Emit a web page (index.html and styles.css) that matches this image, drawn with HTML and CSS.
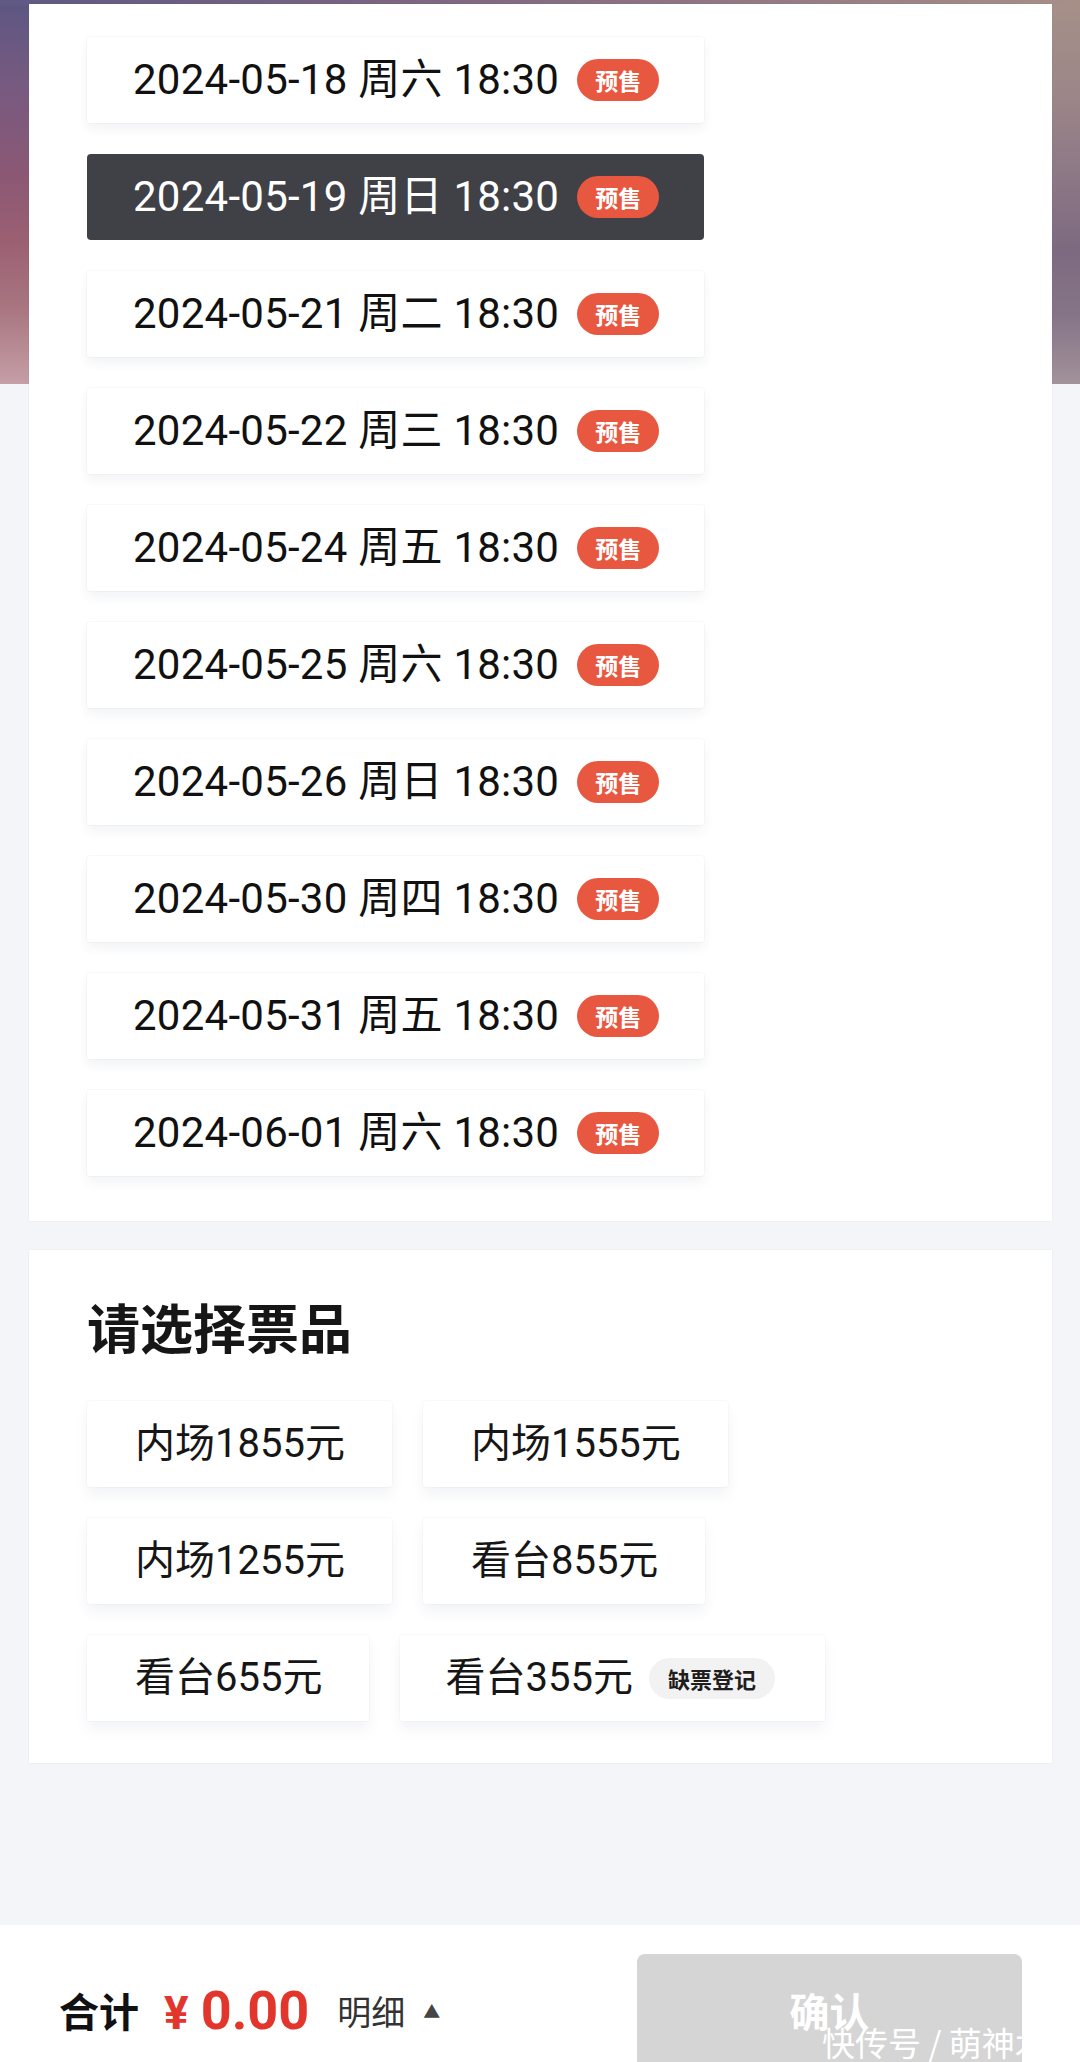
FILE: index.html
```html
<!DOCTYPE html>
<html lang="zh-CN">
<head>
<meta charset="utf-8">
<title>选择场次与票品</title>
<link rel="stylesheet" href="styles.css">
</head>
<body>
<div class="page">
  <section class="card sessions">
    <div class="session"><span class="session-text">2024-05-18 周六 18:30</span><span class="badge">预售</span></div>
    <div class="session active"><span class="session-text">2024-05-19 周日 18:30</span><span class="badge">预售</span></div>
    <div class="session"><span class="session-text">2024-05-21 周二 18:30</span><span class="badge">预售</span></div>
    <div class="session"><span class="session-text">2024-05-22 周三 18:30</span><span class="badge">预售</span></div>
    <div class="session"><span class="session-text">2024-05-24 周五 18:30</span><span class="badge">预售</span></div>
    <div class="session"><span class="session-text">2024-05-25 周六 18:30</span><span class="badge">预售</span></div>
    <div class="session"><span class="session-text">2024-05-26 周日 18:30</span><span class="badge">预售</span></div>
    <div class="session"><span class="session-text">2024-05-30 周四 18:30</span><span class="badge">预售</span></div>
    <div class="session"><span class="session-text">2024-05-31 周五 18:30</span><span class="badge">预售</span></div>
    <div class="session"><span class="session-text">2024-06-01 周六 18:30</span><span class="badge">预售</span></div>
  </section>

  <section class="card tickets">
    <h2 class="title">请选择票品</h2>
    <div class="ticket-rows">
      <div class="ticket-row">
        <div class="ticket">内场1855元</div>
        <div class="ticket">内场1555元</div>
      </div>
      <div class="ticket-row">
        <div class="ticket">内场1255元</div>
        <div class="ticket">看台855元</div>
      </div>
      <div class="ticket-row">
        <div class="ticket">看台655元</div>
        <div class="ticket ticket-short">看台355元<span class="tag">缺票登记</span></div>
      </div>
    </div>
  </section>
</div>

<footer class="bar">
  <div class="total">
    <span class="total-label">合计</span>
    <span class="price"><span class="yen">¥</span>0.00</span>
    <span class="detail">明细</span>
    <span class="arrow">▲</span>
  </div>
  <div class="confirm">
    <span class="confirm-text">确认</span>
  </div>
  <span class="watermark">快传号 / 萌神木</span>
</footer>
</body>
</html>
```

FILE: styles.css
```css
* { box-sizing: border-box; }

html, body {
  margin: 0;
  padding: 0;
}

body {
  width: 1080px;
  height: 2062px;
  overflow: hidden;
  font-family: Roboto, "Noto Sans CJK SC", sans-serif;
  color: #151515;
  background: #f4f5f8;
}

.page {
  padding: 4px 28px 0 29px;
  background:
    linear-gradient(to right, #5f5984 0%, #7a6480 35%, #8f7683 65%, #a69088 100%) left top / 100% 5px no-repeat,
    linear-gradient(to bottom, #5c5783 0%, #775a80 22%, #8a5874 45%, #9a5f72 62%, #a87580 80%, #c59ea6 100%) left top / 540px 384px no-repeat,
    linear-gradient(to bottom, #a69088 0%, #9c8688 25%, #8d7886 45%, #7e6a80 65%, #857488 82%, #a29299 100%) right top / 540px 384px no-repeat,
    #f4f5f8;
}

.card {
  background: #ffffff;
  box-shadow: 0 0 1px rgba(40, 30, 50, 0.12);
}

/* sessions */
.sessions {
  display: flex;
  flex-direction: column;
  align-items: flex-start;
  gap: 31px;
  padding: 33px 58px 45px 58px;
  height: 1217px;
}

.session {
  display: flex;
  align-items: center;
  height: 86px;
  padding: 0 45px 0 46px;
  background: #ffffff;
  border-radius: 3px;
  box-shadow: 0 0 0 1px rgba(0, 0, 0, 0.025), 0 6px 12px rgba(40, 50, 90, 0.06);
}

.session-text {
  font-size: 42px;
  line-height: 1;
  letter-spacing: 0.25px;
  color: #111111;
  white-space: nowrap;
}

.session.active {
  background: #404146;
  border-radius: 4px;
  box-shadow: none;
}

.session.active .session-text {
  color: #ffffff;
}

.badge {
  display: inline-flex;
  align-items: center;
  justify-content: center;
  width: 82px;
  height: 42px;
  margin-left: 18px;
  border-radius: 21px;
  background: #e8573f;
  color: #ffffff;
  font-family: "Noto Sans CJK SC", sans-serif;
  font-size: 23px;
  font-weight: 700;
  line-height: 1;
}

/* tickets */
.tickets {
  margin-top: 29px;
  padding: 50px 58px 42px 58px;
  height: 513px;
}

.title {
  margin: 0;
  font-family: "Noto Sans CJK SC", sans-serif;
  font-size: 53px;
  line-height: 52px;
  font-weight: 700;
  color: #161616;
}

.ticket-rows {
  display: flex;
  flex-direction: column;
  gap: 31px;
  margin-top: 49px;
}

.ticket-row {
  display: flex;
  gap: 31px;
}

.ticket {
  display: flex;
  align-items: center;
  height: 86px;
  padding: 0 47px 0 48px;
  background: #ffffff;
  border-radius: 3px;
  font-size: 40px;
  line-height: 1;
  color: #161616;
  white-space: nowrap;
  box-shadow: 0 0 0 1px rgba(0, 0, 0, 0.02), 0 8px 14px rgba(40, 55, 110, 0.06);
}

.ticket-short {
  padding: 0 50px 0 45px;
}

.tag {
  display: inline-flex;
  align-items: center;
  justify-content: center;
  height: 41px;
  margin-left: 16px;
  padding: 0 19px;
  border-radius: 21px;
  background: #f2f2f3;
  color: #1e1e1e;
  font-family: "Noto Sans CJK SC", sans-serif;
  font-size: 22px;
  font-weight: 700;
}

/* bottom bar */
.bar {
  position: relative;
  display: flex;
  justify-content: space-between;
  align-items: flex-start;
  margin-top: 162px;
  height: 137px;
  padding: 0 58px 0 59px;
  background: #ffffff;
}

.total {
  display: flex;
  align-items: center;
  height: 56px;
  margin-top: 57px;
  white-space: nowrap;
}

.total-label {
  font-family: "Noto Sans CJK SC", sans-serif;
  font-size: 40px;
  font-weight: 700;
  color: #111111;
}

.price {
  margin-left: 25px;
  font-family: Roboto, sans-serif;
  font-size: 54px;
  font-weight: 700;
  color: #e2362c;
}

.yen {
  display: inline-block;
  margin-right: 12px;
  font-size: 46px;
}

.detail {
  margin-left: 28px;
  font-family: "Noto Sans CJK SC", sans-serif;
  font-size: 34px;
  color: #333333;
}

.arrow {
  margin-left: 18px;
  font-size: 17px;
  color: #444444;
}

.confirm {
  display: flex;
  justify-content: center;
  align-items: flex-start;
  width: 385px;
  height: 108px;
  margin-top: 29px;
  padding-top: 36px;
  border-radius: 8px 8px 0 0;
  background: #d5d5d5;
}

.confirm-text {
  font-family: "Noto Sans CJK SC", sans-serif;
  font-size: 40px;
  line-height: 40px;
  font-weight: 700;
  color: #ffffff;
}

.watermark {
  position: absolute;
  left: 822px;
  top: 99px;
  font-family: "Noto Sans CJK SC", sans-serif;
  font-size: 33px;
  line-height: 36px;
  color: #ffffff;
  white-space: nowrap;
}
```
